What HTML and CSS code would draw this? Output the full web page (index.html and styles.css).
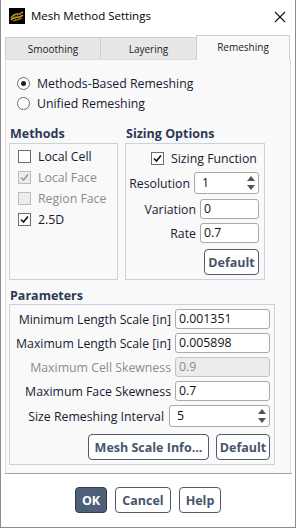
FILE: index.html
```html
<!DOCTYPE html>
<html lang="en">
    <head>
        <meta charset="UTF-8">
        <title>Mesh Method Settings</title>
        <link rel="stylesheet" href="styles.css">
    </head>
    <body>
        <div class="window">
            <header class="titlebar">
                <svg class="app-icon" width="16" height="16" viewBox="0 0 16 16">
                    <rect width="16" height="16" fill="#000"/>
                    <path d="M2 10 C4 7, 6 6, 9 6 C11 6, 12 5, 14 4" stroke="#c8961e" stroke-width="1.4" fill="none"/>
                    <path d="M2 12 C4 10, 7 9, 10 9 C12 9, 13 8, 14 7" stroke="#d9a82a" stroke-width="1.4" fill="none"/>
                    <path d="M4 13 C6 12, 9 12, 13 10" stroke="#a87a14" stroke-width="1.2" fill="none"/>
                    <path d="M5 8 L7 12 M8 6 L10 11 M11 5 L12 9" stroke="#8a6410" stroke-width="1" fill="none"/>
                </svg>
                <span class="title">Mesh Method Settings</span>
                <svg class="close" width="12" height="12" viewBox="0 0 12 12">
                    <path d="M1 1 L11 11 M11 1 L1 11" stroke="#111" stroke-width="1.1"/>
                </svg>
            </header>

            <nav class="tabs">
                <div class="tab tab-1">Smoothing</div>
                <div class="tab tab-2">Layering</div>
                <div class="tab tab-3 active">Remeshing</div>
            </nav>

            <main class="panel">
                <div class="radios">
                    <div class="option-row"><span class="radio checked"></span>Methods-Based Remeshing</div>
                    <div class="option-row"><span class="radio"></span>Unified Remeshing</div>
                </div>

                <div class="columns">
                    <section class="group methods">
                        <h3 class="group-title">Methods</h3>
                        <div class="group-box">
                            <div class="option-row"><span class="check"></span>Local Cell</div>
                            <div class="option-row disabled">
                                <span class="check">
                                    <svg width="11" height="11" viewBox="0 0 11 11"><path d="M2 5.5 L4.5 8 L9 2.5" stroke="#9a9a9a" stroke-width="1.6" fill="none"/></svg>
                                </span>Local Face
                            </div>
                            <div class="option-row disabled"><span class="check"></span>Region Face</div>
                            <div class="option-row">
                                <span class="check">
                                    <svg width="11" height="11" viewBox="0 0 11 11"><path d="M2 5.5 L4.5 8 L9 2.5" stroke="#111" stroke-width="1.6" fill="none"/></svg>
                                </span>2.5D
                            </div>
                        </div>
                    </section>

                    <section class="group sizing">
                        <h3 class="group-title">Sizing Options</h3>
                        <div class="group-box">
                            <div class="option-row sizing-check">
                                <span class="check">
                                    <svg width="11" height="11" viewBox="0 0 11 11"><path d="M2 5.5 L4.5 8 L9 2.5" stroke="#111" stroke-width="1.6" fill="none"/></svg>
                                </span>Sizing Function
                            </div>
                            <div class="field-row resolution">
                                <span>Resolution</span>
                                <div class="spin small-spin">1<span class="arrows"><i class="up"></i><i class="down"></i></span></div>
                            </div>
                            <div class="field-row variation">
                                <span>Variation</span>
                                <div class="input small">0</div>
                            </div>
                            <div class="field-row rate">
                                <span>Rate</span>
                                <div class="input small">0.7</div>
                            </div>
                            <div class="field-row sizing-btn">
                                <button class="btn default-sm">Default</button>
                            </div>
                        </div>
                    </section>
                </div>

                <section class="group params">
                    <h3 class="group-title">Parameters</h3>
                    <div class="group-box">
                        <div class="field-row">
                            <span>Minimum Length Scale [in]</span>
                            <div class="input wide">0.001351</div>
                        </div>
                        <div class="field-row">
                            <span>Maximum Length Scale [in]</span>
                            <div class="input wide">0.005898</div>
                        </div>
                        <div class="field-row disabled">
                            <span>Maximum Cell Skewness</span>
                            <div class="input wide off">0.9</div>
                        </div>
                        <div class="field-row">
                            <span>Maximum Face Skewness</span>
                            <div class="input wide">0.7</div>
                        </div>
                        <div class="field-row interval">
                            <span>Size Remeshing Interval</span>
                            <div class="spin wide-spin">5<span class="arrows"><i class="up"></i><i class="down"></i></span></div>
                        </div>
                        <div class="field-row param-btns">
                            <button class="btn scale-info">Mesh Scale Info...</button>
                            <button class="btn default-lg">Default</button>
                        </div>
                    </div>
                </section>
            </main>

            <div class="separator"></div>

            <footer class="actions">
                <button class="btn ok">OK</button>
                <button class="btn cancel">Cancel</button>
                <button class="btn help">Help</button>
            </footer>
        </div>
    </body>
</html>
```

FILE: styles.css
```css
body {
    margin: 0;
    background-color: #ffffff;
    font-family: "Open Sans", "Noto Sans", sans-serif;
    font-size: 12.3px;
    color: #161b30;
}
.window {
    width: 296px;
    height: 528px;
    box-sizing: border-box;
    border: 1px solid #8c8c8c;
    border-top: none;
    background-color: #ffffff;
}
.titlebar {
    height: 35px;
    display: flex;
    align-items: flex-start;
    padding-left: 8px;
}
.app-icon {
    margin-top: 8px;
}
.title {
    margin-left: 6px;
    margin-top: 8px;
    font-size: 11.5px;
    color: #000;
    flex: 1;
}
.close {
    margin-top: 11px;
    margin-right: 9px;
}
.tabs {
    display: flex;
    align-items: flex-end;
    height: 24px;
    margin: 0 4px;
    position: relative;
    z-index: 1;
}
.tab {
    box-sizing: border-box;
    height: 22px;
    background-color: #e7e7e7;
    border: 1px solid #cfcfcf;
    border-bottom: none;
    font-size: 10px;
    color: #1a1a1a;
    text-align: center;
    line-height: 22px;
}
.tab-1 {
    width: 96px;
}
.tab-2 {
    width: 97px;
    margin-left: -1px;
}
.tab-3 {
    width: 94px;
    margin-left: -1px;
}
.tab.active {
    height: 25px;
    margin-bottom: -1px;
    background-color: #f9f9f9;
    line-height: 22px;
}
.panel {
    margin: 0 4px;
    background-color: #f9f9f9;
    border: 1px solid #dcdcdc;
    border-bottom: none;
    padding: 0 3px 8px 3px;
}
.radios {
    padding-top: 13px;
    padding-left: 8px;
}
.option-row {
    height: 20px;
    display: flex;
    align-items: center;
    gap: 7px;
}
.option-row.disabled {
    color: #8c8c8c;
}
.radio {
    width: 13px;
    height: 13px;
    box-sizing: border-box;
    border: 1px solid #6e6e6e;
    border-radius: 50%;
    background-color: #fff;
    display: flex;
    align-items: center;
    justify-content: center;
}
.radio.checked::after {
    content: "";
    width: 5px;
    height: 5px;
    border-radius: 50%;
    background-color: #222;
}
.check {
    width: 13px;
    height: 13px;
    box-sizing: border-box;
    border: 1px solid #6e6e6e;
    background-color: #fff;
    display: flex;
    align-items: center;
    justify-content: center;
}
.disabled .check {
    border-color: #bcbcbc;
    background-color: #ececec;
}
.columns {
    display: flex;
    gap: 7px;
}
.group-title {
    margin: 14px 0 2px 1px;
    font-size: 12.5px;
    line-height: 14px;
    font-weight: bold;
    color: #2b3a55;
}
.group-box {
    border: 1px solid #c9d1df;
    box-sizing: border-box;
}
.methods {
    width: 109px;
}
.methods .group-box {
    height: 137px;
    padding: 2px 0 0 8px;
}
.methods .option-row {
    height: 21px;
}
.sizing {
    width: 140px;
}
.sizing .group-box {
    height: 137px;
    padding: 4px 5px 0 0;
}
.sizing-check {
    margin-left: 25px;
}
.field-row {
    display: flex;
    justify-content: flex-end;
    align-items: center;
    gap: 4px;
}
.field-row.disabled {
    color: #8c8c8c;
}
.input,
.spin {
    box-sizing: border-box;
    height: 20px;
    background-color: #fff;
    border: 1px solid #a9a9a9;
    border-radius: 3px;
    padding-left: 3px;
    line-height: 18px;
    color: #111;
    position: relative;
}
.input.off {
    background-color: #ececec;
    border-color: #c4c4c4;
    color: #8c8c8c;
}
.spin {
    height: 22px;
    line-height: 20px;
    padding-left: 7px;
}
.arrows {
    position: absolute;
    right: 3px;
    top: 3px;
    bottom: 3px;
    display: flex;
    flex-direction: column;
    justify-content: space-between;
}
.arrows i {
    width: 0;
    height: 0;
    border-left: 4px solid transparent;
    border-right: 4px solid transparent;
}
.arrows .up {
    border-bottom: 5px solid #555;
}
.arrows .down {
    border-top: 5px solid #555;
}
.resolution {
    margin-top: 4px;
}
.small-spin {
    width: 65px;
}
.small {
    width: 59px;
}
.variation {
    margin-top: 5px;
}
.rate {
    margin-top: 4px;
}
.sizing-btn {
    margin-top: 6px;
}
.btn {
    box-sizing: border-box;
    height: 26px;
    border: 1px solid #505a6a;
    border-radius: 4px;
    background-color: #fff;
    font-family: "Open Sans", "Noto Sans", sans-serif;
    font-size: 12.5px;
    font-weight: bold;
    color: #46556b;
    padding: 0;
}
.default-sm {
    width: 55px;
}
.params {
    width: 266px;
}
.params .group-title {
    margin-top: 9px;
    margin-bottom: 1px;
}
.params .group-box {
    padding: 4px 4px 4px 0;
    display: flex;
    flex-direction: column;
    gap: 4px;
}
.wide {
    width: 95px;
}
.interval {
    gap: 5px;
}
.wide-spin {
    width: 101px;
}
.param-btns {
    margin-top: 3px;
    gap: 7px;
}
.scale-info {
    width: 121px;
}
.default-lg {
    width: 54px;
}
.separator {
    height: 1px;
    margin: 0 3px 0 4px;
    background-color: #a3a3a3;
}
.actions {
    display: flex;
    justify-content: center;
    gap: 8px;
    padding-top: 13px;
}
.ok {
    width: 32px;
    background-color: #4f5f78;
    border-color: #2f3b4e;
    color: #ffffff;
}
.cancel {
    width: 56px;
}
.help {
    width: 42px;
}
```
